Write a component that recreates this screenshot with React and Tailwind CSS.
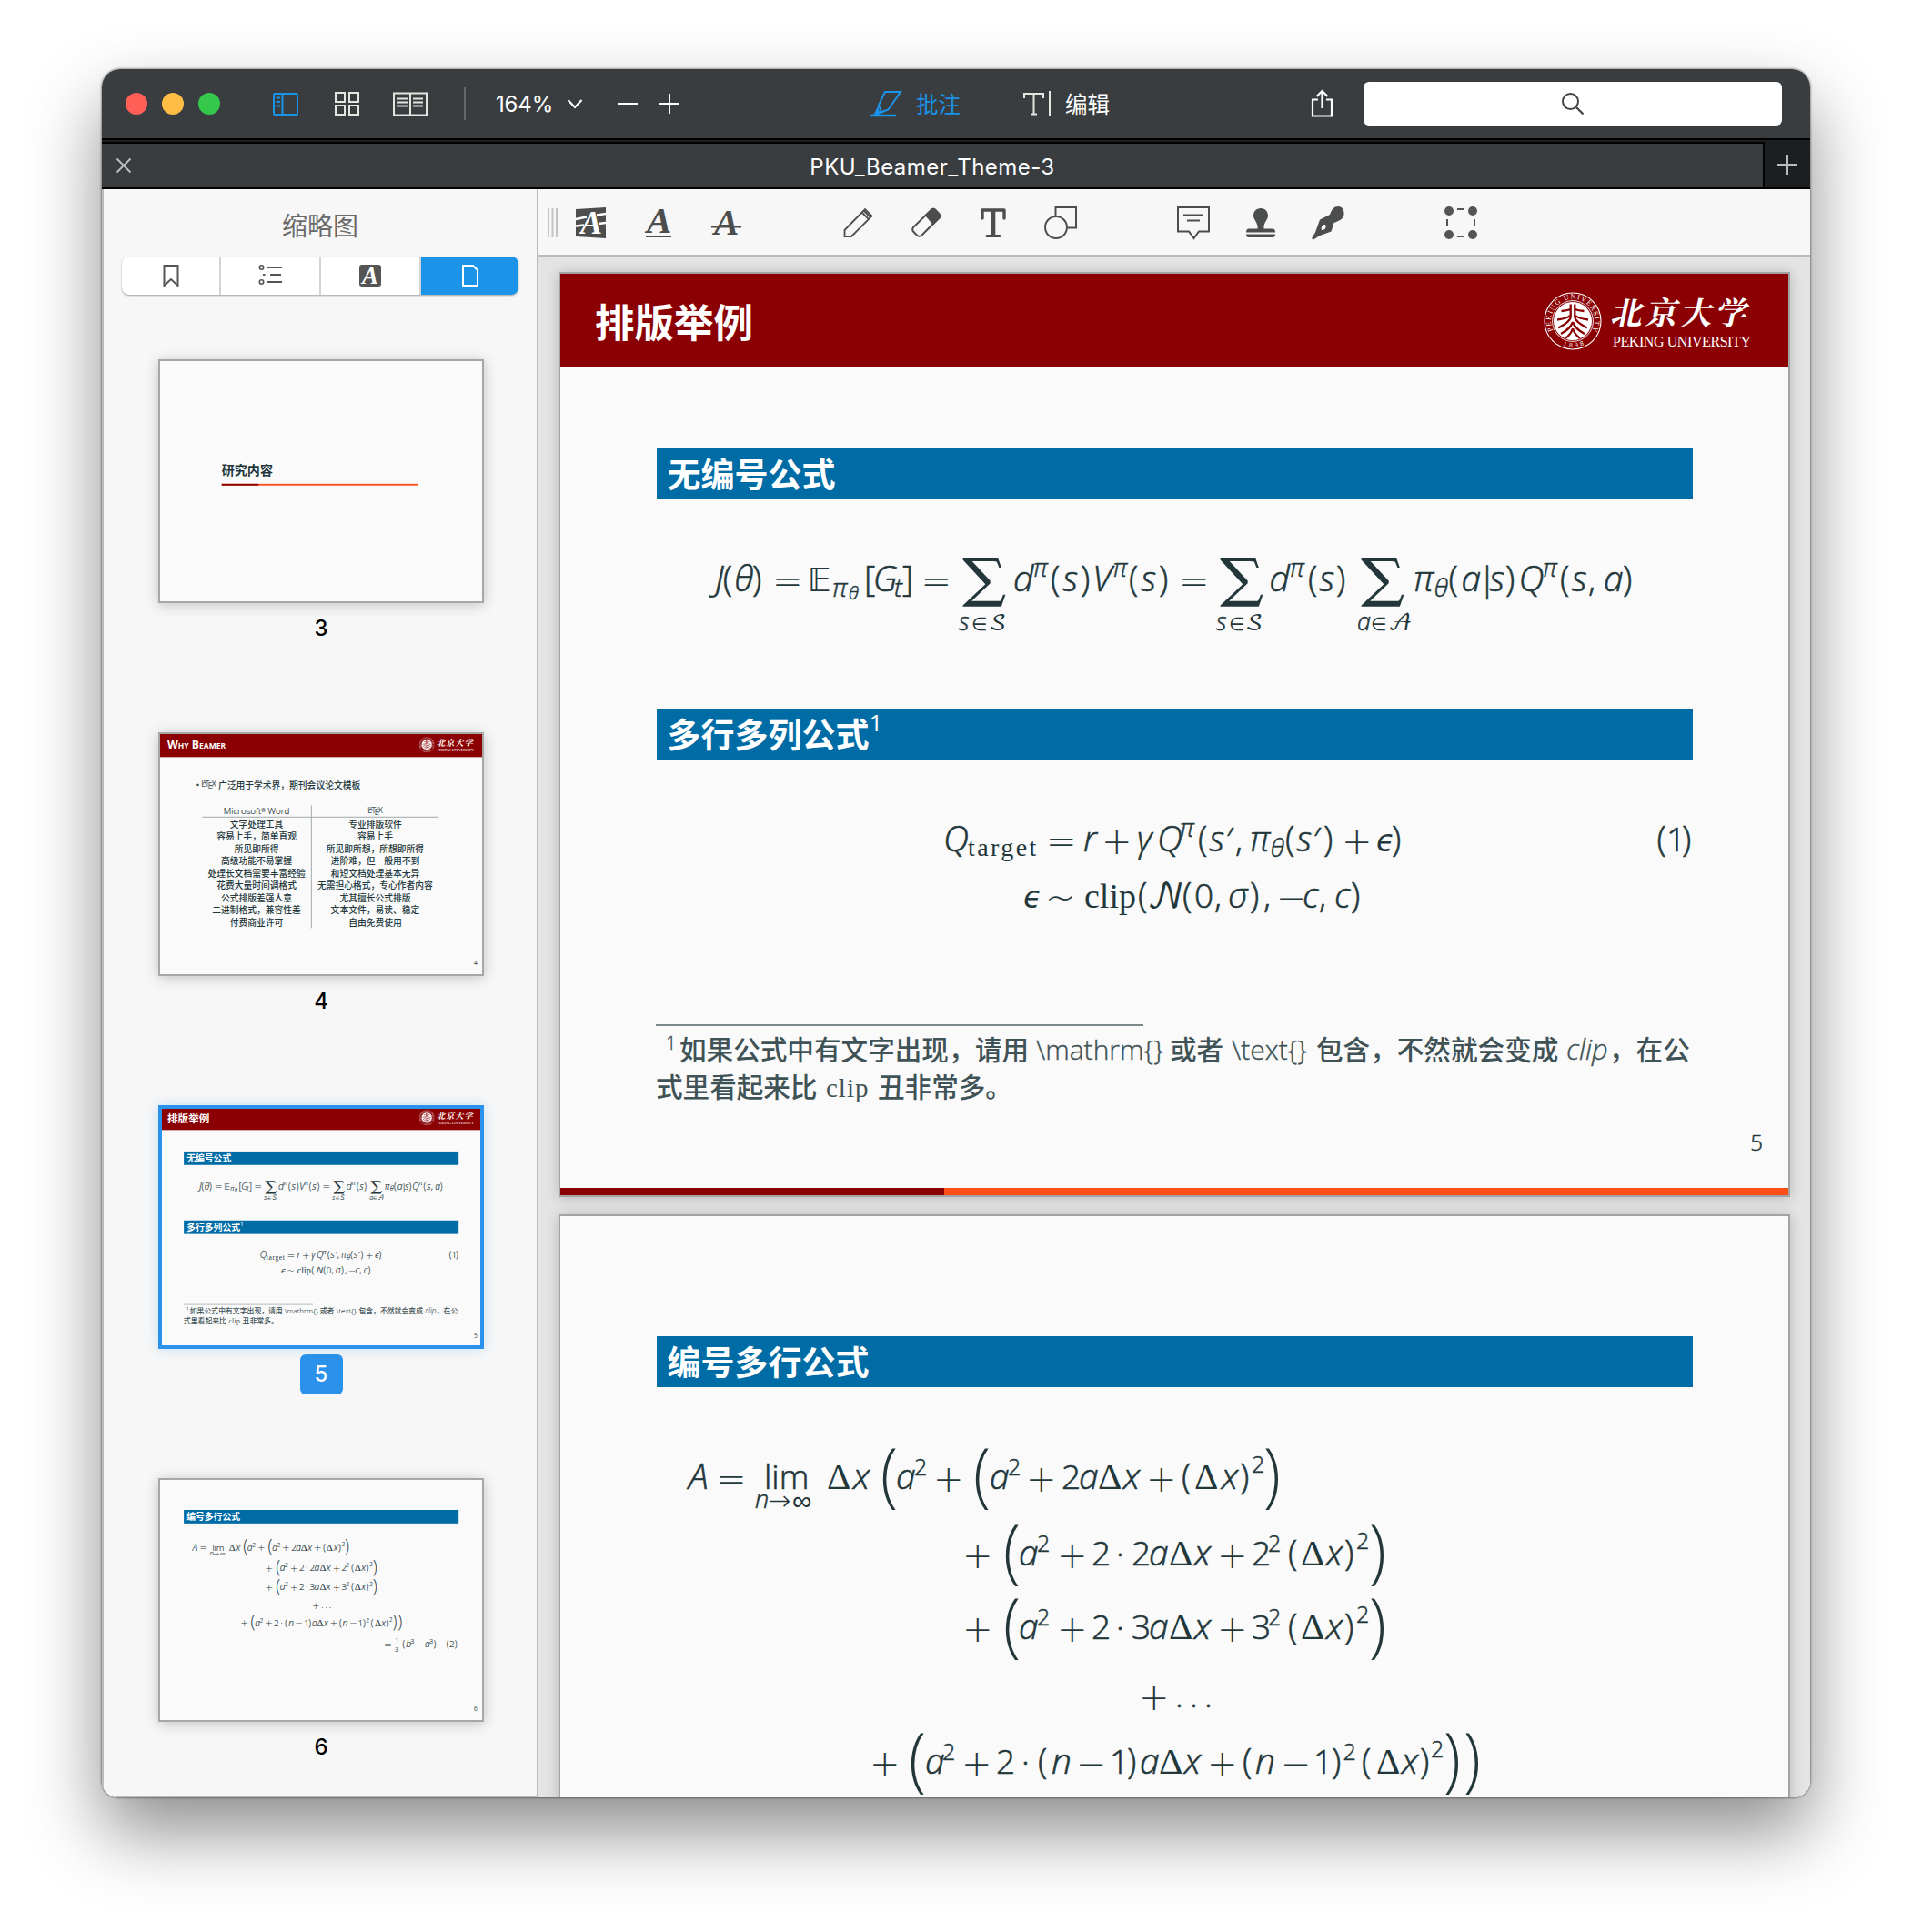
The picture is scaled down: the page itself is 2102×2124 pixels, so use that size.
import React from "react";

const UI = "font-[Inter,'Noto_Sans_CJK_SC',sans-serif]";

/* ---------- formula typesetting ---------- */

const KIND = {
  v: "italic font-light text-[39px] [-webkit-text-stroke:0.6px]",
  n: "font-light text-[37px] [-webkit-text-stroke:0.6px]",
  d: "font-light text-[37px] [-webkit-text-stroke:0.6px]",
  p: "font-light text-[38px] [-webkit-text-stroke:0.6px]",
  op: "font-['DejaVu_Sans',sans-serif] font-extralight text-[40px] align-[-3px] -translate-x-0.5",
  g: "italic font-light text-[38px] [-webkit-text-stroke:0.6px]",
  e: "font-['DejaVu_Sans',sans-serif] font-extralight italic text-[33px]",
  D: "font-['Liberation_Serif',serif] text-[41px]",
  bb: "font-['DejaVu_Sans',sans-serif] text-[35px]",
  cal: "font-['DejaVu_Math_TeX_Gyre','DejaVu_Serif',serif] text-[37px]",
  rm: "font-['Liberation_Serif',serif] text-[38px]",
  rms: "font-['Liberation_Serif',serif] text-[28px] tracking-[2.400px] align-[-5px]",
  sup: "font-light text-[25px] align-[15px] [-webkit-text-stroke:0.5px]",
  suph: "font-light text-[25px] align-[18px] [-webkit-text-stroke:0.5px]",
  gsup: "italic font-light text-[27px] align-[16px] [-webkit-text-stroke:0.5px]",
  gsub: "italic font-light text-[28px] align-[-6px] [-webkit-text-stroke:0.5px]",
  gss: "italic font-light text-[20px] align-[-9px] [-webkit-text-stroke:0.5px]",
  sub: "italic font-light text-[28px] align-[-6px] [-webkit-text-stroke:0.5px]",
  lim: "italic font-light text-[27px] align-[-43px] [-webkit-text-stroke:0.5px]",
  limo: "font-['DejaVu_Sans',sans-serif] font-extralight text-[20px] align-[-43px]",
  limc: "font-['DejaVu_Math_TeX_Gyre','DejaVu_Serif',serif] text-[25px] align-[-43px]",
  lm: "italic font-light text-[27px] align-[-21px] [-webkit-text-stroke:0.5px]",
  lmo: "font-['DejaVu_Sans',sans-serif] font-extralight text-[30px] align-[-23px]",
  sum: "font-['DejaVu_Math_TeX_Gyre','DejaVu_Serif',serif] text-[50px] align-[-4px] origin-left scale-x-[1.150]",
  big: "font-light text-[77px] align-[-11px] origin-left scale-x-90",
  c: "font-['Noto_Sans_CJK_SC',sans-serif] font-medium text-[29.6px] text-[#3f5256]",
  f: "font-light text-[30px] text-[#3f5256] [-webkit-text-stroke:0.4px]",
  fi: "font-light italic text-[31px] text-[#3f5256] [-webkit-text-stroke:0.4px]",
  fs: "font-light text-[20px] align-[11px] text-[#3f5256] [-webkit-text-stroke:0.4px]",
  fr: "font-['Liberation_Serif',serif] text-[29px] tracking-[1px] text-[#3f5256]",
  fb: "font-light text-[24px] align-[2px]",
  fu: "font-light text-[27px] align-[20px] [-webkit-text-stroke:0.5px]",
  fd: "font-light text-[27px] align-[-20px] [-webkit-text-stroke:0.5px]",
};

/* A row of glyph runs; every run is as wide as the distance to the next one. */
function Line({ t, className = "" }) {
  return (
    <div
      className={`whitespace-nowrap font-['Open_Sans',sans-serif] text-[37px] ${className}`}
      style={{ paddingLeft: t[0][0] - 617 }}
    >
      {t.map(([x, s, k], i) => (
        <span
          key={i}
          className={`inline-block whitespace-pre leading-[0] ${KIND[k]}`}
          style={{ width: i + 1 < t.length ? t[i + 1][0] - x : 60 }}
        >
          {s}
        </span>
      ))}
    </div>
  );
}

const EQ1 = [
  [787, "J", "v"], [795.7, "(", "p"], [808.4, "θ", "g"], [828, ")", "p"], [852, "=", "op"], [889, "𝔼", "bb"],
  [916, "π", "gsub"], [934, "θ", "gss"], [951, "[", "p"], [960.7, "G", "v"], [984, "t", "sub"], [993, "]", "p"],
  [1015.5, "=", "op"], [1055, "∑", "sum"], [1055, "s", "lim"], [1069, "∈", "limo"], [1088, "𝒮", "limc"],
  [1115, "d", "v"], [1137, "π", "gsup"], [1156, "(", "p"], [1169.500, "s", "v"], [1189, ")", "p"],
  [1202, "V", "v"], [1224.5, "π", "gsup"], [1242, "(", "p"], [1255.500, "s", "v"], [1275, ")", "p"],
  [1299, "=", "op"], [1338, "∑", "sum"], [1338, "s", "lim"], [1352, "∈", "limo"], [1370, "𝒮", "limc"],
  [1396.500, "d", "v"], [1419, "π", "gsup"], [1439, "(", "p"], [1451.500, "s", "v"], [1470, ")", "p"],
  [1493, "∑", "sum"], [1493, "a", "lim"], [1508, "∈", "limo"], [1527, "𝒜", "limc"],
  [1555, "π", "g"], [1577.7, "θ", "gsub"], [1593.5, "(", "p"], [1607.500, "a", "v"], [1626, "|", "n"],
  [1638.500, "s", "v"], [1656, ")", "p"], [1670.500, "Q", "v"], [1697, "π", "gsup"], [1716, "(", "p"],
  [1729, "s", "v"], [1747, ",", "n"], [1764, "a", "v"], [1785, ")", "p"],
];
const EQ3 = [
  [1038, "Q", "v"], [1065, "target", "rms"], [1153, "=", "op"], [1192, "r", "v"], [1214, "+", "op"],
  [1251, "γ", "g"], [1273, "Q", "v"], [1298, "π", "gsup"], [1318, "(", "p"], [1330.500, "s", "v"],
  [1349, "′", "n"], [1359, ",", "n"], [1375, "π", "g"], [1397.7, "θ", "gsub"], [1414, "(", "p"],
  [1426.500, "s", "v"], [1445, "′", "n"], [1456, ")", "p"], [1478, "+", "op"], [1514, "ϵ", "e"], [1531, ")", "p"],
  [1822.6, "(", "p"], [1833, "1", "d"], [1850, ")", "p"],
];
const EQ4 = [
  [1126, "ϵ", "e"], [1152, "~", "op"], [1193, "clip", "rm"], [1252, "(", "p"], [1262, "𝒩", "cal"],
  [1301, "(", "p"], [1314, "0", "d"], [1336, ",", "n"], [1351, "σ", "g"], [1375, ")", "p"],
  [1390, ",", "n"], [1406, "−", "op"], [1433, "c", "v"], [1451, ",", "n"], [1468, "c", "v"], [1486, ")", "p"],
];
const F1 = [
  [733, "1", "fs"], [748, "如果公式中有文字出现，", "c"], [1073, "请用", "c"], [1140, "\\mathrm{}", "f"],
  [1287, "或者", "c"], [1355, "\\text{}", "f"], [1448, "包含，不然就会变成", "c"], [1723, "clip", "fi"],
  [1770, "，在公", "c"],
];
const F2 = [[722, "式里看起来比", "c"], [909, "clip", "fr"], [966, "丑非常多。", "c"]];

const L1 = [
  [758, "A", "v"], [790, "=", "op"], [831, "n", "lm"], [841, "lim", "d"], [845, "→", "lmo"], [872, "∞", "lmo"],
  [910, "Δ", "D"], [939, "x", "v"], [969, "(", "big"], [986, "a", "v"], [1006, "2", "sup"], [1029, "+", "op"],
  [1071, "(", "big"], [1089, "a", "v"], [1109, "2", "sup"], [1131, "+", "op"], [1168, "2", "d"], [1187, "a", "v"],
  [1208, "Δ", "D"], [1236, "x", "v"], [1263, "+", "op"], [1300, "(", "p"], [1314, "Δ", "D"], [1344, "x", "v"],
  [1364, ")", "p"], [1377, "2", "suph"], [1390, ")", "big"],
];
const sq = (n) => [
  [1061, "+", "op"], [1104, "(", "big"], [1121, "a", "v"], [1141, "2", "sup"], [1165, "+", "op"], [1201, "2", "d"],
  [1228, "·", "d"], [1245, n, "d"], [1264, "a", "v"], [1286, "Δ", "D"], [1314, "x", "v"], [1341, "+", "op"],
  [1377, n, "d"], [1395, "2", "sup"], [1417, "(", "p"], [1431, "Δ", "D"], [1459, "x", "v"], [1479, ")", "p"],
  [1492, "2", "suph"], [1506, ")", "big"],
];
const L4 = [[1255, "+", "op"], [1293, ".", "n"], [1309, ".", "n"], [1325, ".", "n"]];
const L5 = [
  [959, "+", "op"], [1000, "(", "big"], [1018, "a", "v"], [1037, "2", "sup"], [1060, "+", "op"], [1096, "2", "d"],
  [1124, "·", "d"], [1142, "(", "p"], [1157, "n", "v"], [1186, "−", "op"], [1221, "1", "d"], [1240, ")", "p"],
  [1254, "a", "v"], [1275, "Δ", "D"], [1303, "x", "v"], [1330, "+", "op"], [1367, "(", "p"], [1381, "n", "v"],
  [1411, "−", "op"], [1445, "1", "d"], [1465, ")", "p"], [1477.4, "2", "sup"], [1498, "(", "p"], [1514, "Δ", "D"],
  [1542, "x", "v"], [1562, ")", "p"], [1574, "2", "suph"], [1588, ")", "big"], [1610, ")", "big"],
];
const L6 = [
  [1554, "=", "op"], [1595, "—", "fb"], [1598, "1", "fu"], [1598, "3", "fd"], [1629, "(", "p"], [1644, "b", "v"],
  [1663, "3", "sup"], [1688, "−", "op"], [1722, "a", "v"], [1742, "3", "sup"], [1758, ")", "p"], [1811, "(", "p"],
  [1824, "2", "d"], [1845, ")", "p"],
];

/* ---------- slides ---------- */

function Seal() {
  return (
    <svg viewBox="0 0 64 64" className="h-16 w-16 shrink-0" fill="none" stroke="#fff">
      <defs>
        <path id="arcTop" d="M10.6 42.5 A24 24 0 1 1 53.4 42.5" />
        <path id="arcBottom" d="M15 55.5 A29 29 0 0 0 49 55.5" />
      </defs>
      <circle cx="32" cy="32" r="31" strokeWidth="1.1" />
      <circle cx="32" cy="32" r="22.4" strokeWidth="0.9" />
      <circle cx="32" cy="32" r="21" fill="#fff" stroke="none" />
      <text fill="#fff" stroke="none" className="font-['Liberation_Serif',serif] text-[8px]">
        <textPath href="#arcTop" textLength="98">PEKING UNIVERSITY</textPath>
      </text>
      <text fill="#fff" stroke="none" className="font-['Liberation_Serif',serif] text-[7.5px]">
        <textPath href="#arcBottom" startOffset="7" textLength="24">1898</textPath>
      </text>
      <g stroke="#8a0003" strokeWidth="2.3">
        <path d="M29.7 13.500v14.500q-1 5-13.500 11.500M34.300 13.500v14.500q1 5 13.500 11.500" />
        <path d="M29 19q-3 1.500-9.500 2M35 19q3 1.500 9.500 2M29 26q-4 3.500-14 4.500M35 26q4 3.500 14 4.500" />
        <path d="M32 33q-3 8-13 13M32 33q3 8 13 13M32 40q-1.500 6-8 11M32 40q1.500 6 8 11" />
      </g>
    </svg>
  );
}

function Header({ children, caps }) {
  return (
    <div className="flex h-[103px] shrink-0 items-center bg-[#8a0003] pl-[38px] pr-[43px] text-white">
      <div
        className={
          caps
            ? "font-['Open_Sans',sans-serif] text-[46px] font-bold [font-variant:small-caps]"
            : "font-['Noto_Sans_CJK_SC',sans-serif] text-[43.500px] font-bold leading-none"
        }
      >
        {children}
      </div>
      <div className="ml-auto flex items-center">
        <Seal />
        <div className="ml-3 flex w-[150px] flex-col">
          <div className="flex h-[42px] -skew-x-12 items-center justify-between font-['Noto_Serif_CJK_SC','Noto_Sans_CJK_SC',serif] text-[35px] font-bold leading-none">
            <span>北</span><span>京</span><span>大</span><span>学</span>
          </div>
          <div className="mt-1 whitespace-nowrap font-['Liberation_Serif',serif] text-[16px] leading-[18px] tracking-[-0.420px]">
            PEKING UNIVERSITY
          </div>
        </div>
      </div>
    </div>
  );
}

function Bar({ children, className }) {
  return (
    <div
      className={`ml-[105.5px] mr-[105px] flex h-[56px] shrink-0 items-center bg-[#006ca6] pb-[1px] pl-[12px] font-['Noto_Sans_CJK_SC',sans-serif] text-[37px] font-bold leading-none text-white ${className}`}
    >
      {children}
    </div>
  );
}

function Foot({ n, w }) {
  return (
    <div className="mt-auto">
      <div className="mb-[32px] pr-[28px] text-right font-['Open_Sans',sans-serif] text-[24px] font-light leading-[36px] [-webkit-text-stroke:0.5px]">{n}</div>
      <div className="flex h-[8px] bg-[#ff4e17]">
        <div className={`bg-[#8a0003] ${w}`} />
      </div>
    </div>
  );
}

const SLIDE = "flex h-[1013px] w-[1350px] flex-col overflow-hidden bg-[#fafafa] text-[#23373b]";
const ROW = "h-[60px] shrink-0 leading-[60px]";

function Slide3() {
  return (
    <div className={SLIDE}>
      <div className="ml-[263px] mt-[425px] font-['Noto_Sans_CJK_SC',sans-serif] text-[53px] font-bold leading-[62px]">研究内容</div>
      <div className="ml-[263px] mt-[29px] flex h-[7px] w-[812px] bg-[#ff4e17]">
        <div className="w-[153px] bg-[#8a0003]" />
      </div>
    </div>
  );
}

function Latex() {
  return (
    <span className="font-['Open_Sans',sans-serif] text-[34px] font-light [-webkit-text-stroke:0.6px]">
      L<span className="-ml-[12px] align-[8px] text-[0.700em]">A</span>
      <span className="-ml-[4px]">T</span>
      <span className="-ml-[5px] align-[-8px]">E</span>
      <span className="-ml-[4px]">X</span>
    </span>
  );
}

const WORD = ["文字处理工具", "容易上手，简单直观", "所见即所得", "高级功能不易掌握", "处理长文档需要丰富经验", "花费大量时间调格式", "公式排版差强人意", "二进制格式，兼容性差", "付费商业许可"];
const TEX = ["专业排版软件", "容易上手", "所见即所想，所想即所得", "进阶难，但一般用不到", "和短文档处理基本无异", "无需担心格式，专心作者内容", "尤其擅长公式排版", "文本文件，易读、稳定", "自由免费使用"];

function Column({ head, rows, className }) {
  return (
    <div className={`flex flex-col items-center ${className}`}>
      <div className="flex h-[50px] w-full items-center justify-center border-b-[3px] border-[#8b9597] font-['Open_Sans',sans-serif] text-[37px] font-light [-webkit-text-stroke:0.6px]">{head}</div>
      {rows.map((r) => (
        <div key={r} className="h-[51px] whitespace-nowrap leading-[52px]">{r}</div>
      ))}
    </div>
  );
}

function Slide4() {
  return (
    <div className={`${SLIDE} font-['Noto_Sans_CJK_SC',sans-serif] text-[36.800px] font-medium`}>
      <Header caps>Why Beamer</Header>
      <div className="mt-[88px] flex h-[50px] items-center whitespace-nowrap pl-[145px] leading-[50px]">
        <span className="w-[33px]">·</span>
        <div className="w-[71px] whitespace-nowrap"><Latex /></div>
        <span>广泛用于学术界，期刊会议论文模板</span>
      </div>
      <div className="ml-[182px] mt-[62px] flex w-[980px]">
        <Column className="w-[454px] border-r-[3px] border-[#8b9597]" head={<span>Microsoft<sup className="text-[20px]">®</sup> Word</span>} rows={WORD} />
        <Column className="w-[526px]" head={<Latex />} rows={TEX} />
      </div>
      <Foot n="4" w="w-[25%]" />
    </div>
  );
}

function Slide5() {
  return (
    <div className={SLIDE}>
      <Header>排版举例</Header>
      <Bar className="mt-[89px]">无编号公式</Bar>
      <Line t={EQ1} className={`mt-[57px] ${ROW}`} />
      <Bar className="mt-[112.500px]">
        多行多列公式<span className="-mt-6 font-['Open_Sans',sans-serif] text-[26px] font-normal">1</span>
      </Bar>
      <Line t={EQ3} className={`mt-[57.500px] ${ROW}`} />
      <Line t={EQ4} className={`mt-[2px] ${ROW}`} />
      <div className="ml-[105px] mt-[112px] h-[2px] w-[536px] shrink-0 bg-[#7b8789]" />
      <Line t={F1} className="mt-[2px] h-[41px] shrink-0 leading-[41px]" />
      <Line t={F2} className="h-[41px] shrink-0 leading-[41px]" />
      <Foot n="5" w="w-[31.250%]" />
    </div>
  );
}

function Slide6() {
  return (
    <div className={SLIDE}>
      <Bar className="mt-[132px]">编号多行公式</Bar>
      <Line t={L1} className={`mt-[68px] ${ROW}`} />
      <Line t={sq("2")} className={`mt-[24px] ${ROW}`} />
      <Line t={sq("3")} className={`mt-[21px] ${ROW}`} />
      <Line t={L4} className={`mt-[15px] ${ROW}`} />
      <Line t={L5} className={`mt-[13px] ${ROW}`} />
      <Line t={L6} className={`mt-[28px] ${ROW}`} />
      <Foot n="6" w="w-[37.500%]" />
    </div>
  );
}

/* ---------- sidebar ---------- */

function Thumb({ n, active, children }) {
  return (
    <div className="flex h-[410px] shrink-0 flex-col items-center">
      <div className={`relative h-[268px] w-[358px] overflow-visible ${active ? "shadow-[0_0_14px_rgba(43,146,235,0.250)]" : "shadow-[0_2px_14px_rgba(0,0,0,0.220)]"}`}>
        <div className="h-[268px] w-[358px] overflow-hidden">
          <div className="origin-top-left scale-[0.2652]">{children}</div>
        </div>
        <div className={`absolute inset-0 ${active ? "border-4 border-[#2b92eb]" : "border-2 border-[#a7a7a7]"}`} />
      </div>
      <div
        className={`mt-[6px] flex h-[44px] items-center justify-center rounded-[6px] text-[24px] font-medium leading-none ${
          active ? "w-[47px] bg-[#2b92eb] text-white" : "text-black"
        }`}
      >
        {n}
      </div>
    </div>
  );
}

function Segments() {
  const s = { fill: "none", stroke: "#555", strokeWidth: 2 };
  return (
    <div className="mx-[20px] mt-[14px] flex h-[42px] shrink-0 overflow-hidden rounded-[8px] bg-white shadow-[0_1px_2px_rgba(0,0,0,0.350)]">
      <div className="flex w-[109px] items-center justify-center border-r-2 border-[#d4d4d4]">
        <svg width="18" height="26" {...s}><path d="M1.500 2h15v22l-7.500-7-7.500 7z" /></svg>
      </div>
      <div className="flex w-[110px] items-center justify-center border-r-2 border-[#d4d4d4]">
        <svg width="26" height="26" {...s}>
          <circle cx="3.500" cy="4" r="2.200" strokeWidth="1.600" />
          <circle cx="3.500" cy="20" r="2.200" strokeWidth="1.600" />
          <path d="M9 4h17M13 12h12M9 20h17M5 12h2.500" />
        </svg>
      </div>
      <div className="flex w-[110px] items-center justify-center border-r-2 border-[#d4d4d4]">
        <span className="flex h-6 w-6 items-center justify-center rounded-[3px] bg-[#555] font-['Liberation_Serif',serif] text-[27px] font-bold italic leading-none text-white">A</span>
      </div>
      <div className="flex flex-1 items-center justify-center bg-[#1a93e9]">
        <svg width="20" height="26" fill="none" stroke="#fff" strokeWidth="2"><path d="M2 2h11l5 5v17H2z" /></svg>
      </div>
    </div>
  );
}

function Sidebar() {
  return (
    <div className="flex w-[480px] shrink-0 flex-col overflow-hidden border-b-2 border-l-2 border-r-2 border-[#bbbbbb] bg-[#f7f7f7]">
      <div className="mt-[22px] text-center text-[28px] leading-[38px] text-[#6a6a6a]">缩略图</div>
      <Segments />
      <div className="mt-[71px] flex flex-col items-center pl-[2px]">
        <Thumb n="3"><Slide3 /></Thumb>
        <Thumb n="4"><Slide4 /></Thumb>
        <Thumb n="5" active><Slide5 /></Thumb>
        <Thumb n="6"><Slide6 /></Thumb>
      </div>
    </div>
  );
}

/* ---------- toolbars ---------- */

function TitleBar() {
  const w = { fill: "none", stroke: "#e6e6e0", strokeWidth: 2 };
  return (
    <div className="flex h-[76px] shrink-0 items-center bg-[#393d40] text-white">
      <div className="ml-[26px] flex gap-4">
        <span className="h-6 w-6 rounded-full bg-[#ff5f57]" />
        <span className="h-6 w-6 rounded-full bg-[#febc45]" />
        <span className="h-6 w-6 rounded-full bg-[#35c84b]" />
      </div>
      <svg className="ml-[58px]" width="28" height="26" fill="none" stroke="#1a93e9" strokeWidth="2">
        <rect x="1" y="2" width="26" height="23" rx="1" />
        <path d="M10.500 2v23M3.500 6.500h4.500M3.500 11h4.500M3.500 15.500h4.500" />
      </svg>
      <svg className="ml-[40px]" width="27" height="28" {...w}>
        <path d="M1 2h10v10H1zM16 2h10v10H16zM1 16h10v10H1zM16 16h10v10H16z" />
      </svg>
      <svg className="ml-[37px]" width="38" height="28" {...w}>
        <path d="M1 2.500h36v24H1zM19 2.500v24M5 8.500h11M5 12.500h11M5 16.500h11M22 8.500h11M22 12.500h11M22 16.500h11" />
      </svg>
      <div className="ml-[40px] h-9 w-[2px] bg-[#63676a]" />
      <div className="ml-[33px] mt-[2px] w-[66px] text-[24px] tracking-[-0.150px]">164%</div>
      <svg className="ml-[12px]" width="18" height="12" fill="none" stroke="#fff" strokeWidth="2.200"><path d="M1.500 2l7.500 8 7.500-8" /></svg>
      <svg className="ml-[37px]" width="24" height="24" stroke="#fff" strokeWidth="2"><path d="M1 12h22" /></svg>
      <svg className="ml-[22px]" width="24" height="24" stroke="#fff" strokeWidth="2"><path d="M1 12h22M12 1v22" /></svg>
      <svg className="ml-[208px]" width="38" height="30" fill="none" stroke="#1a93e9" strokeWidth="2">
        <path d="M17 3h17L20.500 22.500 13 25.500l-3-8z" transform="translate(0 -1)" />
        <path d="M10 17.500L7 27l9-4" />
        <path d="M4 28l4-8 5 5z" fill="#1a93e9" stroke="none" />
        <path d="M1 28h28" strokeWidth="2.400" />
      </svg>
      <span className="ml-[13px] mt-[3px] text-[24.500px] leading-none text-[#1a93e9]">批注</span>
      <svg className="ml-[69px]" width="30" height="28" fill="none" stroke="#e6e6e0" strokeWidth="2">
        <path d="M1 8V3h21v5M11.500 3v22M8 25.500h7M29 0v28" />
      </svg>
      <span className="ml-[16px] mr-[1px] mt-[3px] text-[24.500px] leading-none">编辑</span>
      <svg className="ml-[220px] -mt-[2px]" width="25" height="31" fill="none" stroke="#fff" strokeWidth="2.200">
        <path d="M8 11.500H2v18h21v-18h-6M12.500 21V2M6.500 8l6-6 6 6" />
      </svg>
      <div className="ml-[33px] flex h-[48px] w-[460px] items-center justify-center rounded-[6px] bg-white">
        <svg width="26" height="26" fill="none" stroke="#444" strokeWidth="2"><circle cx="10.500" cy="10.500" r="8.500" /><path d="M16.500 16.500l8 8" strokeWidth="2.300" /></svg>
      </div>
    </div>
  );
}

function TabBar() {
  return (
    <div className="flex h-[56px] shrink-0 border-b-2 border-t-2 border-black bg-[#1c1e20]">
      <div className="mt-[2px] flex w-[1828px] items-center border-r-2 border-t-2 border-black bg-[#393d40]">
        <svg className="ml-[15px]" width="18" height="18" stroke="#b9bbbc" strokeWidth="2"><path d="M1.500 1.500l15 15M16.500 1.500l-15 15" /></svg>
        <div className="mr-[33px] mt-[3px] flex-1 text-center text-[24px] tracking-[0.450px] text-white">PKU_Beamer_Theme-3</div>
      </div>
      <div className="flex flex-1 items-center justify-center pt-[2px]">
        <svg width="22" height="22" stroke="#b9bbbc" strokeWidth="2"><path d="M0 11h22M11 0v22" /></svg>
      </div>
    </div>
  );
}

function Tools() {
  const s = { fill: "none", stroke: "#4c4e4d", strokeWidth: 2 };
  const a = "font-['Liberation_Serif',serif] font-bold italic";
  return (
    <div className="flex h-[74px] shrink-0 items-center border-b-2 border-[#bbbbbb] bg-[#f7f7f7] pt-[1px]">
      <svg className="ml-[10px]" width="11" height="32" stroke="#c3c3c3" strokeWidth="2"><path d="M1 0v32M5.500 0v32M10 0v32" /></svg>
      <svg className="ml-[20px] overflow-visible" width="33" height="34">
        <path d="M0 2L33 0v34L0 32z" fill="#4c4e4d" />
        <path d="M0 13l12-2.500M23 8.500L33 7M0 20.500l9-1M25 18l8-1" stroke="#fff" strokeWidth="2.400" />
        <text x="5" y="29" fill="#fff" className={`${a} text-[36px]`}>A</text>
      </svg>
      <svg className="ml-[43px] overflow-visible" width="30" height="34">
        <text x="2" y="28" fill="#4c4e4d" className={`${a} text-[41px]`}>A</text>
        <path d="M1 32h28" {...s} />
      </svg>
      <svg className="ml-[43px] overflow-visible" width="33" height="34">
        <text x="3" y="30" fill="#4c4e4d" className={`${a} text-[41px]`}>A</text>
        <path d="M0 21.500h33" {...s} />
      </svg>
      <svg className="ml-[112px]" width="33" height="34" {...s} strokeWidth="1.800">
        <path d="M1.500 25L24 2l7.500 7.500L9 32H1.500zM20.500 5.500l7.500 7.500M22.500 3.500l7.500 7.500" />
      </svg>
      <svg className="ml-[42px]" width="33" height="34" {...s}>
        <path d="M2 22L22 2.500q2-1.500 4 .5l4.500 4.500q1.500 2 0 4L11 31q-2.500 1.500-4.500 0L2 26.500q-1.500-2 0-4.500z" />
        <path d="M16 8.500l6.500-6q2-1.500 4 .5l4 4.500q1.500 2 0 4L24 18z" fill="#4c4e4d" />
      </svg>
      <svg className="ml-[43px]" width="28" height="34" fill="none" stroke="#4c4e4d">
        <path d="M2 12V3h24v9" strokeWidth="3.400" strokeLinecap="round" strokeLinejoin="round" />
        <path d="M14 3v28" strokeWidth="4.600" />
        <path d="M7 31.500h14" strokeWidth="3.200" strokeLinecap="round" />
      </svg>
      <svg className="ml-[42px]" width="36" height="38" {...s}>
        <path d="M12.500 12V2h22.500v22.500H25.500" />
        <circle cx="13" cy="24" r="12" />
      </svg>
      <svg className="ml-[110px]" width="36" height="38" {...s}>
        <path d="M1 2h34v26.500H24L18.500 36 13 28.500H1zM7 10.500h22M11 16.500h14" />
      </svg>
      <svg className="ml-[40px]" width="32" height="34" fill="#4c4e4d">
        <path d="M16 1c5 0 8 3.500 8 8.500 0 4-5.500 8-4.500 14H29q3 0 3 4H0q0-4 3-4h9.500c1-6-4.500-10-4.500-14C8 4.500 11 1 16 1z" />
        <path d="M0 29.500h32q0 3.500-3 3.500H3q-3 0-3-3.500z" />
      </svg>
      <svg className="ml-[39px]" width="38" height="38" fill="#4c4e4d">
        <path fillRule="evenodd" d="M21 10c2-6 5-9 9-9 4.500 0 7 3.500 6.500 9-.5 5-6 7-11 9-1.500 4-2 7-3 9.500L10 33l-7 4.500-2-1.500 4-6.500 5-14zM14.500 21c-2.500 1-3.500 4-2.500 5.500s4 0 4.500-2.500-.5-3.500-2-3z" />
      </svg>
      <svg className="ml-[108px]" width="38" height="38" fill="#555" stroke="#555">
        <g stroke="none"><circle cx="6" cy="6" r="5" /><circle cx="32" cy="6" r="5" /><circle cx="6" cy="32" r="5" /><circle cx="32" cy="32" r="5" /></g>
        <path d="M15 4h8M15 34h8M4 15v8M34 15v8" strokeWidth="2" />
      </svg>
    </div>
  );
}

function Page({ children }) {
  return (
    <div className="w-[1354px] shrink-0 border-2 border-[#a3a3a3] shadow-[0_1px_14px_rgba(0,0,0,0.200)]">{children}</div>
  );
}

export default function App() {
  return (
    <div className={`flex h-[2124px] w-[2102px] flex-col items-center overflow-hidden bg-white pt-[76px] ${UI}`}>
      <div className="w-[1878px] rounded-b-[18px] rounded-t-[20px] shadow-[0_0_2px_1px_rgba(0,0,0,0.350),0_38px_80px_rgba(0,0,0,0.450)]">
        <div className="flex h-[1900px] flex-col overflow-hidden rounded-b-[18px] rounded-t-[20px] bg-[#e4e4e4]">
          <TitleBar />
          <TabBar />
          <div className="flex min-h-0 flex-1">
            <Sidebar />
            <div className="flex min-w-0 flex-1 flex-col">
              <Tools />
              <div className="flex min-h-0 flex-1 flex-col gap-[19px] overflow-hidden bg-[#e4e4e4] pl-[22px] pt-[17px]">
                <Page><Slide5 /></Page>
                <Page><Slide6 /></Page>
              </div>
            </div>
          </div>
        </div>
      </div>
    </div>
  );
}
